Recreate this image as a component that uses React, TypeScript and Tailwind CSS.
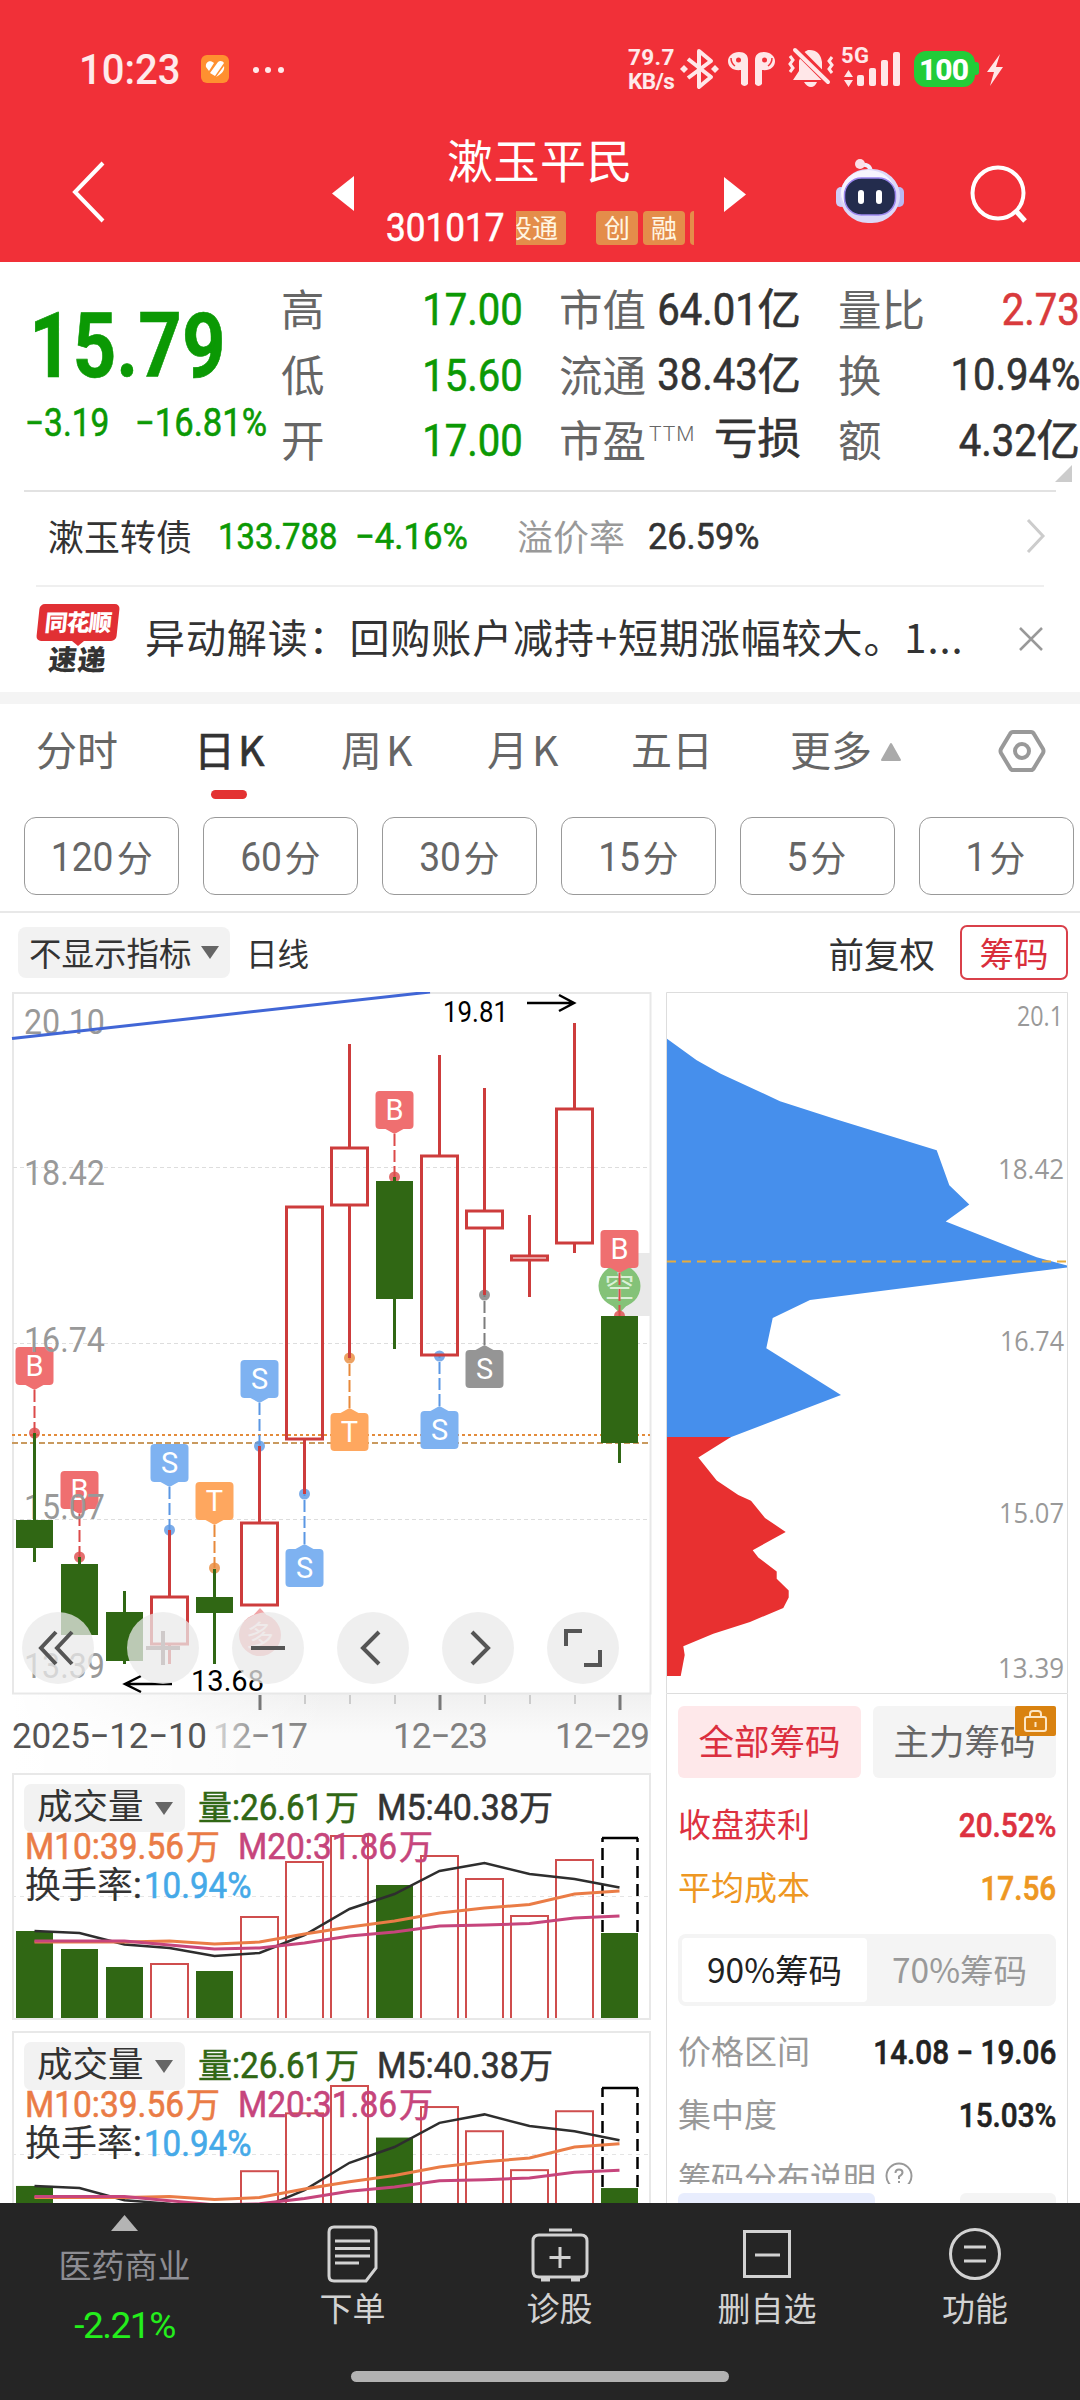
import React from "react";

const NUM = "font-['Roboto','Noto_Sans_CJK_SC',sans-serif] [-webkit-text-stroke:0.6px_currentColor]";

const QUOTE_ROWS = [
  ["高", "17.00", "", "市值", "64.01", "亿", "量比", "2.73", ""],
  ["低", "15.60", "", "流通", "38.43", "亿", "换", "10.94%", ""],
  ["开", "17.00", "", "市盈", "", "亏损", "额", "4.32", "亿"],
];

const MINUTES = ["120", "60", "30", "15", "5", "1"];

// y: wick top, body top, body bottom, wick bottom
interface Candle {
  up: boolean;
  y: [number, number, number, number];
}

const CANDLES: Candle[] = [
  { up: false, y: [1433, 1520, 1548, 1562] },
  { up: false, y: [1557, 1564, 1635, 1635] },
  { up: false, y: [1591, 1612, 1661, 1664] },
  { up: true, y: [1530, 1597, 1644, 1664] },
  { up: false, y: [1569, 1597, 1613, 1664] },
  { up: true, y: [1446, 1523, 1605, 1605] },
  { up: true, y: [1207, 1207, 1439, 1494] },
  { up: true, y: [1044, 1148, 1205, 1358] },
  { up: false, y: [1177, 1181, 1299, 1349] },
  { up: true, y: [1055, 1156, 1355, 1355] },
  { up: true, y: [1088, 1211, 1228, 1295] },
  { up: true, y: [1215, 1256, 1260, 1297] },
  { up: true, y: [1023, 1109, 1243, 1253] },
  { up: false, y: [1316, 1316, 1443, 1463] },
];

interface Signal {
  i: number;
  t: string;
  box: number;
  dot: number;
  fill: string;
  line: string;
}

const MARKS: Signal[] = [
  { i: 0, t: "B", box: 1347, dot: 1433, fill: "#ef6f70", line: "#dc4a4a" },
  { i: 1, t: "B", box: 1471, dot: 1557, fill: "#ef6f70", line: "#dc4a4a" },
  { i: 3, t: "S", box: 1444, dot: 1530, fill: "#7eb2f1", line: "#5b97e4" },
  { i: 4, t: "T", box: 1482, dot: 1568, fill: "#fea75f", line: "#e8893a" },
  { i: 5, t: "S", box: 1360, dot: 1446, fill: "#7eb2f1", line: "#5b97e4" },
  { i: 6, t: "S", box: 1549, dot: 1494, fill: "#7eb2f1", line: "#5b97e4" },
  { i: 7, t: "T", box: 1413, dot: 1358, fill: "#fea75f", line: "#e8893a" },
  { i: 8, t: "B", box: 1091, dot: 1177, fill: "#ef6f70", line: "#dc4a4a" },
  { i: 9, t: "S", box: 1411, dot: 1356, fill: "#7eb2f1", line: "#5b97e4" },
  { i: 10, t: "S", box: 1350, dot: 1295, fill: "#959595", line: "#7d7d7d" },
  { i: 13, t: "B", box: 1230, dot: 1316, fill: "#ef6f70", line: "#dc4a4a" },
];

const VOLUME = [1931, 1949, 1967, 1964, 1971, 1917, 1862, 1836, 1885, 1856, 1879, 1916, 1860, 1933];
const M5 = [1931, 1933, 1944.5, 1948, 1956, 1953, 1935, 1909, 1894, 1871, 1863, 1874, 1879, 1887.5];
const M10 = [1942, 1942, 1942, 1941, 1944, 1942, 1934, 1927, 1921, 1913, 1908, 1904.5, 1894, 1891];
const M20 = [1941, 1941, 1941, 1945, 1949, 1948, 1943, 1936, 1932, 1926, 1925, 1923.5, 1918, 1916];

const cx = (i: number) => 34.5 + i * 45;

const StatusBar: React.FC = () => (
  <div className="flex h-[136px] items-start pt-[46px] text-white/90">
    <span className="ml-[79px] mt-[2px] w-[103px] origin-left scale-x-[0.93] whitespace-nowrap font-['Roboto',sans-serif] text-[43px] font-medium leading-[43px]">
      10:23
    </span>
    <svg className="ml-[19px] mt-[9px]" width="28" height="28" viewBox="0 0 28 28">
      <rect width="28" height="28" rx="6" fill="#ff9030" />
      <path
        d="M5 12c-1-5 4-8 8-4l-5 8zM9 18l8-11c2-2 5-1 6 1l-9 13zM15 22l8-11c1 4-2 8-8 11z"
        fill="#fff"
      />
    </svg>
    <svg className="ml-[22px] mt-[20px]" width="34" height="8" fill="#ffe9ea">
      <circle cx="5" cy="4" r="3" />
      <circle cx="17" cy="4" r="3" />
      <circle cx="30" cy="4" r="3" />
    </svg>
    <div className="-mt-px ml-[343px] w-[46px] font-['Roboto',sans-serif] text-[22.500px] font-bold leading-[24px]">
      <div className="tracking-[0.4px]">79.7</div>
      <div className="tracking-[-0.6px]">KB/s</div>
    </div>
    <svg className="ml-[4px]" width="328" height="46" viewBox="678 46 328 46" fill="#ffe7e8">
      <path d="M688 59l23 18-12 10V51l12 10-23 17" fill="none" stroke="#ffe7e8" strokeWidth="4" strokeLinejoin="round" />
      <path d="M684 65l4 4-4 4-4-4zM715 65l4 4-4 4-4-4z" />
      <path d="M739 52c6 0 9 3 9 8v24q-3.500 4-7 0V70c-8 1-13-3-13-9 0-5 5-9 11-9z" />
      <path d="M764 52c-6 0-9 3-9 8v24q3.500 4 7 0V70c8 1 13-3 13-9 0-5-5-9-11-9z" />
      <circle cx="738.500" cy="60" r="2.500" fill="#f13038" />
      <circle cx="764.500" cy="60" r="2.500" fill="#f13038" />
      <path d="M731 58q0 5 4 8M772 58q0 5-4 8" stroke="#f13038" strokeWidth="1.500" fill="none" />
      <path d="M793 80l6-9V61q2-8 9-11 12-1 14 12v8l7 10zM804 82h13q-2 5-6 5t-7-5z" />
      <path d="M796 49l34 34" stroke="#f13038" strokeWidth="8" />
      <path d="M795 50l33 32" stroke="#ffe7e8" strokeWidth="4" strokeLinecap="round" />
      <path d="M790 56l3 4-3 4 3 4-3 4M832 57l-3 4 3 4-3 4 3 4" stroke="#ffe7e8" strokeWidth="3" fill="none" />
      <path d="M844 77h9l-4.500-7zM844 80h9l-4.500 7z" />
      <rect x="857" y="75" width="7" height="11" rx="2" />
      <rect x="869" y="68" width="7" height="18" rx="2" />
      <rect x="881" y="60" width="7" height="26" rx="2" />
      <rect x="893" y="52" width="7" height="34" rx="2" />
      <text x="841" y="63" fontFamily="Roboto" fontSize="22" fontWeight="700" textLength="28">
        5G
      </text>
      <rect x="914" y="51" width="61" height="36" rx="12" fill="#22cc38" />
      <rect x="973" y="62" width="6" height="13" rx="3" fill="#22cc38" />
      <text x="919" y="80" fontFamily="Roboto" fontSize="30" fontWeight="800" fill="#fff" textLength="50">
        100
      </text>
      <path d="M1000 54l-13 18h7l-4 14 13-19h-7z" />
    </svg>
  </div>
);

const Robot: React.FC = () => (
  <svg width="70" height="66" viewBox="0 0 70 66">
    <path d="M25 6q10-2 11 7" fill="none" stroke="#f3eefc" strokeWidth="4" />
    <circle cx="25" cy="5" r="5" fill="#fbdfe8" />
    <rect x="1" y="28" width="10" height="20" rx="5" fill="#cfcdf8" />
    <rect x="59" y="28" width="10" height="20" rx="5" fill="#b9b9f2" />
    <rect x="5" y="10" width="60" height="54" rx="28" fill="#dcd8f8" />
    <ellipse cx="33" cy="34" rx="27" ry="23" fill="#f7f5fe" />
    <rect x="9.500" y="19" width="51" height="37" rx="17" fill="#232c4d" stroke="#9b86ee" strokeWidth="1.500" />
    <rect x="23" y="31" width="6" height="14" rx="3" fill="#fff" />
    <rect x="41" y="31" width="6" height="14" rx="3" fill="#fff" />
  </svg>
);

const Header: React.FC = () => (
  <header className="h-[262px] bg-[#f13038]">
    <StatusBar />
    <div className="flex h-[126px] items-start text-white">
      <svg className="ml-[70px] mt-[24px]" width="38" height="64" fill="none" stroke="#fff" strokeWidth="4">
        <path d="M33 3L5 32l28 29" />
      </svg>
      <svg className="ml-[224px] mt-[40px]" width="22" height="35" fill="#fff">
        <path d="M22 0v35L0 17.500z" />
      </svg>
      <div className="ml-[32px] flex w-[308px] flex-col items-center">
        <h1 className="-mt-[2px] text-[46px] leading-[48px] tracking-[0.5px]">漱玉平民</h1>
        <div className="mt-[29px] flex h-[34px] w-[308px] items-center leading-[34px]">
          <span className={`${NUM} w-[130px] shrink-0 origin-left scale-x-[0.9] text-[39px]`}>301017</span>
          <div className="flex h-[34px] w-[178px] shrink-0 items-center overflow-hidden text-[26px] leading-[32px] text-[#fff6e2]">
            <div className="flex h-[34px] w-[50px] shrink-0 justify-end whitespace-nowrap rounded-r bg-[#e48d4a] pr-[8px]">
              股通
            </div>
            <div className="ml-[30px] h-[34px] w-[42px] shrink-0 rounded bg-[#e48d4a] text-center">创</div>
            <div className="ml-[5px] h-[34px] w-[42px] shrink-0 rounded bg-[#e48d4a] text-center">融</div>
            <div className="ml-[5px] h-[34px] w-[20px] shrink-0 rounded bg-[#e48d4a]" />
          </div>
        </div>
      </div>
      <svg className="ml-[30px] mt-[41px]" width="22" height="35" fill="#fff">
        <path d="M0 0v35l22-17.500z" />
      </svg>
      <div className="ml-[89px] mt-[23px]">
        <Robot />
      </div>
      <svg className="ml-[65px] mt-[28px]" width="60" height="62" fill="none" stroke="#fff" strokeWidth="4">
        <circle cx="28" cy="29" r="25.500" />
        <path d="M46 47l9 10" strokeWidth="5" />
      </svg>
    </div>
  </header>
);

// right aligned figure, the unit keeps its full width
const Figure: React.FC<{ num: string; unit: string; className: string }> = ({ num, unit, className }) => (
  <span className={`${NUM} flex shrink-0 justify-end whitespace-nowrap text-[44.500px] ${className}`}>
    {num && <span className="origin-right scale-x-[0.9]">{num}</span>}
    {unit && <span className="text-[43.500px]">{unit}</span>}
  </span>
);

const Quote: React.FC = () => (
  <section className="relative flex h-[228px] pt-[13px] text-[#333]">
    <div className={`${NUM} w-[281px] shrink-0 text-[#0b9904]`}>
      <div className="ml-[29px] mt-[35px] origin-left scale-x-[0.845] text-[90px] font-bold leading-[74px]">15.79</div>
      <div className="ml-[25px] mt-[18px] flex whitespace-nowrap text-[38px] leading-[42px]">
        <span className="w-[110px] origin-left scale-x-[0.88]">−3.19</span>
        <span className="origin-left scale-x-[0.91]">−16.81%</span>
      </div>
    </div>
    <div className="flex flex-col">
      {QUOTE_ROWS.map((r, n) => (
        <div key={r[0]} className="flex h-[65.500px] items-center text-[43.500px] leading-[65px]">
          <span className="w-[96px] text-[#666]">{r[0]}</span>
          <Figure num={r[1]} unit={r[2]} className="w-[146px] pt-[6px] text-[#0b9904]" />
          <span className="ml-[36px] flex w-[90px] shrink-0 whitespace-nowrap text-[#666]">
            {r[3]}
            {n === 2 && (
              <span className="ml-[3px] mt-[18px] font-['Roboto',sans-serif] text-[21px] font-light leading-[21px] tracking-[1px]">
                TTM
              </span>
            )}
          </span>
          <Figure num={r[4]} unit={r[5]} className={n === 2 ? "w-[152px] pt-[2px]" : "w-[152px] pt-[5px]"} />
          <span className="ml-[37px] w-[91px] text-[#666]">{r[6]}</span>
          <Figure num={r[7]} unit={r[8]} className={n === 0 ? "w-[151px] pt-[6px] text-[#d93a3c]" : "w-[151px] pt-[5px]"} />
        </div>
      ))}
    </div>
    <svg className="absolute bottom-[8px] right-[8px]" width="17" height="17" fill="#ccc">
      <path d="M17 0v17H0z" />
    </svg>
  </section>
);

const BondRow: React.FC = () => (
  <section className="mx-[24px] flex h-[95px] items-center border-t-2 border-[#e2e2e2] pb-[8px] pl-[24px] text-[36px] leading-[40px] text-[#333]">
    <span className="w-[170px]">漱玉转债</span>
    <span className={`${NUM} mt-[4px] w-[137px] origin-left scale-x-[0.9] text-[36.500px] text-[#0b9904]`}>133.788</span>
    <span className={`${NUM} mt-[4px] w-[162px] origin-left scale-x-[0.95] text-[36.500px] text-[#0b9904]`}>−4.16%</span>
    <span className="w-[131px] text-[#999]">溢价率</span>
    <span className={`${NUM} mt-[4px] origin-left scale-x-[0.94] text-[36.500px]`}>26.59%</span>
    <svg className="ml-auto mr-[10px] mt-[3px]" width="20" height="34" fill="none" stroke="#ccc" strokeWidth="3">
      <path d="M2 1l15 16L2 33" />
    </svg>
  </section>
);

const NewsRow: React.FC = () => (
  <section className="mx-[36px] flex h-[107px] items-start border-t-2 border-[#efefef] pt-[17px] text-[#333]">
    <div className="flex w-[84px] flex-col items-center">
      <div className="flex h-[37px] w-[80px] -skew-x-6 items-center justify-center rounded-[5px] bg-[#e13034] pb-[2px] text-[23px] font-black tracking-[-1px] text-white">
        同花顺
      </div>
      <svg width="16" height="5" fill="#e13034">
        <path d="M2 0h12L8 5z" />
      </svg>
      <div className="-skew-x-6 text-[28px] font-black leading-[24px] tracking-[1px]">速递</div>
    </div>
    <p className="ml-[25px] mt-[10px] w-[830px] whitespace-nowrap text-[40px] leading-[44px] tracking-[0.9px]">
      异动解读：回购账户减持+短期涨幅较大。1...
    </p>
    <svg className="ml-auto mt-[22px]" width="26" height="26" stroke="#999" strokeWidth="2.500">
      <path d="M2 2l22 22M24 2L2 24" />
    </svg>
  </section>
);

const Tabs: React.FC = () => (
  <nav className="flex h-[125px] items-start border-t-[12px] border-[#f4f4f4] pt-[21px] text-[41px] leading-[46px] text-[#666]">
    <span className="ml-[36px] w-[158px]">分时</span>
    <div className="w-[147px] text-[#333] [-webkit-text-stroke:0.7px_currentColor]">
      日<span className="ml-[3px]">K</span>
      <div className="ml-[17px] mt-[19px] h-[9px] w-[36px] rounded-full bg-[#e33232]" />
    </div>
    <span className="w-[146px]">
      周<span className="ml-[4px]">K</span>
    </span>
    <span className="w-[144px]">
      月<span className="ml-[4px]">K</span>
    </span>
    <span className="w-[159px]">五日</span>
    <span>更多</span>
    <svg className="ml-[7px] mt-[17px]" width="24" height="20" fill="#aaa">
      <path d="M12 2L21 18H3z" stroke="#aaa" strokeWidth="2" strokeLinejoin="round" />
    </svg>
    <svg className="ml-[95px] mt-[3px]" width="48" height="46" viewBox="0 0 48 46" fill="none" stroke="#999" strokeWidth="4">
      <path d="M15 4h18q2 0 3 2l9 15q1 2 0 4l-9 15q-1 2-3 2H15q-2 0-3-2L3 25q-1-2 0-4l9-15q1-2 3-2z" />
      <circle cx="24" cy="23" r="7" />
    </svg>
  </nav>
);

const Minutes: React.FC = () => (
  <div className="flex h-[96px] gap-[24px] overflow-hidden border-b-2 border-[#e8e8e8] pl-[24px]">
    {MINUTES.map((m) => (
      <div
        key={m}
        className="flex h-[78px] w-[155px] shrink-0 items-center justify-center rounded-[12px] border border-[#999] pr-[4px] text-[36px] leading-[40px] text-[#666]"
      >
        <span className="mt-[3px] origin-right scale-x-[0.93] font-['Roboto',sans-serif] text-[40px]">{m}</span>
        <span className="ml-[3px]">分</span>
      </div>
    ))}
  </div>
);

const Down: React.FC = () => (
  <svg width="18" height="13" fill="#666">
    <path d="M0 0h18L9 13z" />
  </svg>
);

const Toolbar: React.FC = () => (
  <div className="flex h-[79px] items-start pt-[12px] text-[#333]">
    <div className="ml-[18px] mt-[2px] flex h-[51px] w-[212px] items-center justify-between rounded-[8px] bg-[#f2f2f2] px-[11px] text-[32.500px] leading-[40px]">
      <span className="-mt-[2px]">不显示指标</span>
      <Down />
    </div>
    <span className="ml-[16px] mt-[5px] text-[31.500px] leading-[44px]">日线</span>
    <span className="ml-auto mt-[5px] text-[35.500px] leading-[46px]">前复权</span>
    <span className="ml-[25px] mr-[12px] flex h-[55px] w-[108px] items-center justify-center rounded-[7px] border-2 border-[#d9404a] pb-[2px] text-[34.500px] leading-[40px] text-[#d92f3c]">
      筹码
    </span>
  </div>
);

const Mark: React.FC<{ m: Signal }> = ({ m }) => {
  const x = cx(m.i);
  const below = m.box > m.dot;
  const tip = below ? m.box - 5 : m.box + 43;
  const base = below ? m.box : m.box + 38;
  return (
    <g>
      <path d={`M${x} ${tip}V${m.dot}`} stroke={m.line} strokeWidth="2" strokeDasharray="12 4" />
      <circle cx={x} cy={m.dot} r="5.500" fill={m.line} opacity="0.8" />
      <path d={`M${x - 9} ${base}h18L${x} ${tip}z`} fill={m.fill} />
      <rect x={x - 19} y={m.box} width="38" height="38" rx="4" fill={m.fill} />
      <text x={x} y={m.box + 29} fontSize="29" fill="#fff" textAnchor="middle" fontFamily="Roboto">
        {m.t}
      </text>
    </g>
  );
};

const AXIS = [
  ["20.10", 1034],
  ["18.42", 1185],
  ["16.74", 1352],
  ["15.07", 1519],
  ["13.39", 1678],
] as const;

const KLine: React.FC = () => (
  <svg className="block" width="652" height="781" viewBox="0 992 652 781">
    <defs>
      <linearGradient id="axisBg" x1="0" x2="0" y1="0" y2="1">
        <stop offset="0" stopColor="#f0f0f0" />
        <stop offset="0.5" stopColor="#fafafa" />
        <stop offset="1" stopColor="#fafafa" />
      </linearGradient>
      <linearGradient id="fade" x1="0" x2="1" y1="0" y2="0">
        <stop offset="0" stopColor="#ddd" />
        <stop offset="0.5" stopColor="#888" />
      </linearGradient>
      <linearGradient id="axisFade" x1="0" x2="1" y1="0" y2="0">
        <stop offset="0" stopColor="#fff" />
        <stop offset="0.5" stopColor="#fff" stopOpacity="0" />
      </linearGradient>
    </defs>
    <rect x="12" y="1694" width="639" height="80" fill="url(#axisBg)" />
    <rect x="12" y="1694" width="639" height="80" fill="url(#axisFade)" />
    <rect x="13" y="993" width="637.500" height="700.500" fill="#fff" stroke="#e8e8e8" strokeWidth="2" />
    {[1167.5, 1343.5, 1519.5].map((y) => (
      <path key={y} d={`M13 ${y}H650`} stroke="#ddd" strokeDasharray="4 3" />
    ))}
    <path d="M12 1435H650" stroke="#e38b3b" strokeWidth="2" strokeDasharray="3 3" />
    <path d="M12 1443H650" stroke="#c99a5f" strokeWidth="2" strokeDasharray="6 3" />
    <rect x="619" y="1253" width="32" height="63" fill="#e9e9e9" />
    {MARKS.slice(0, 2).map((m) => (
      <Mark key={m.i} m={m} />
    ))}
    <g className={NUM} fontSize="35" fill="#999">
      {AXIS.map(([t, y]) => (
        <text key={t} x="24" y={y} textLength="81" lengthAdjust="spacingAndGlyphs">
          {t}
        </text>
      ))}
    </g>
    <path d="M12 1038.500L430 992" stroke="#4166d6" strokeWidth="3" />
    <g fill="#84c278">
      <circle cx="619.500" cy="1286" r="21" />
      <path d="M607 1300h25l-12.500 13z" />
    </g>
    <text x="619.500" y="1297" fontSize="30" fill="#d9f0d5" textAnchor="middle">
      空
    </text>
    {MARKS.slice(2).map((m) => (
      <Mark key={m.i} m={m} />
    ))}
    {CANDLES.map(({ up, y: [a, b, c, d] }, i) =>
      up ? (
        <g key={i} stroke="#cd3c3c" strokeWidth="3" fill="none">
          <path d={`M${cx(i)} ${a}V${b}M${cx(i)} ${c}V${d}`} />
          <rect x={cx(i) - 18} y={b} width="36" height={c - b} />
        </g>
      ) : (
        <g key={i} fill="#306714">
          <rect x={cx(i) - 1.5} y={a} width="3" height={d - a} />
          <rect x={cx(i) - 18.5} y={b} width="37" height={c - b} />
        </g>
      ),
    )}
    <g fill="#f2a2a4">
      <circle cx="260" cy="1635" r="21" />
      <path d="M247 1622h26l-13-14z" />
    </g>
    <text x="260" y="1646" fontSize="28" fill="#fde9e9" textAnchor="middle">
      多
    </text>
    <g fontFamily="Roboto" fontSize="30">
      <text x="443" y="1022" textLength="65" lengthAdjust="spacingAndGlyphs">
        19.81
      </text>
      <text x="191" y="1691" textLength="73" lengthAdjust="spacingAndGlyphs">
        13.68
      </text>
    </g>
    <path d="M527 1003h47m-15-8l15 8-15 8M172 1684h-47m16-8l-16 8 16 8" fill="none" stroke="#000" strokeWidth="2.500" />
    {Array.from({ length: 9 }, (_, n) => n + 5).map((i) => (
      <path
        key={i}
        d={`M${cx(i) + 0.5} 1695v${(i - 5) % 4 === 0 ? 15 : 9}`}
        stroke={(i - 5) % 4 === 0 ? "#777" : "#ccc"}
        strokeWidth={(i - 5) % 4 === 0 ? 3 : 2}
      />
    ))}
    <g className={NUM} fontSize="35" fill="#808080">
      <text x="12" y="1748" textLength="195" fill="#555">
        2025−12−10
      </text>
      <text x="213" y="1748" textLength="95" fill="url(#fade)">
        12−17
      </text>
      <text x="393" y="1748" textLength="95">
        12−23
      </text>
      <text x="555" y="1748" textLength="95">
        12−29
      </text>
    </g>
  </svg>
);

const CONTROL_PATHS = [
  "M34 20L19 36l15 16M50 20L35 36l15 16",
  "M36 19v34M19 36h34",
  "M19 36h34",
  "M42 20L26 36l16 16",
  "M30 20l16 16-16 16",
  "M19 34V19h16M53 38v15H37",
];

const ChartControls: React.FC = () => (
  <div className="absolute left-[22px] top-[620px] flex gap-[33px]">
    {CONTROL_PATHS.map((d, i) => (
      <div key={d} className="h-[72px] w-[72px] rounded-full bg-[#eaeaea]/75">
        <svg width="72" height="72" fill="none" stroke={i === 1 ? "#cfcaca" : "#555"} strokeWidth="4">
          <path d={d} />
        </svg>
      </div>
    ))}
  </div>
);

const VolumePanel: React.FC<{ stretch: number; offset: number; height: string }> = ({ stretch, offset, height }) => {
  const y = (v: number) => (v - 1836) * stretch + offset;
  const line = (d: number[]) => d.map((v, i) => `${cx(i) - 12},${y(v)}`).join(" ");
  return (
    <div className={`relative ml-[12px] w-[639px] overflow-hidden border-2 border-[#e8e8e8] ${height}`}>
      <svg className="absolute -left-[2px] -top-[2px]" width="639" height="260">
        <path d="M0 123.500H638" stroke="#e4e4e4" strokeDasharray="4 4" />
        {VOLUME.map((v, i) =>
          CANDLES[i].up ? (
            <rect
              key={i}
              x={cx(i) - 30.5}
              y={y(v)}
              width="37"
              height={y(2019) - y(v)}
              fill="none"
              stroke="#cf4e4e"
              strokeWidth="2"
            />
          ) : (
            <rect key={i} x={cx(i) - 30.5} y={y(v)} width="37" height={y(2019.5) - y(v)} fill="#306714" />
          ),
        )}
        <path
          d={`M590.500 ${y(1932)}V${y(1838)}M625.500 ${y(1932)}V${y(1838)}`}
          stroke="#000"
          strokeWidth="2.500"
          strokeDasharray="12 6"
        />
        <path d={`M590 ${y(1838)}h36`} stroke="#000" strokeWidth="2.500" />
        <g fill="none" strokeWidth="2.500">
          <polyline points={line(M5)} stroke="#2e2e2e" />
          <polyline points={line(M10)} stroke="#ea7c46" strokeWidth="3" />
          <polyline points={line(M20)} stroke="#c6457c" strokeWidth="3" />
        </g>
      </svg>
      <div className={`relative whitespace-nowrap text-[36px] ${NUM}`}>
        <div className="flex h-[57px] items-end pl-[10px] leading-[48px] text-[#333]">
          <div className="flex h-[48px] w-[161px] items-center gap-[11px] rounded-[7px] bg-[#f2f2f2] pl-[13px] text-[35.500px] [-webkit-text-stroke:0]">
            <span className="-mt-[2px]">成交量</span>
            <Down />
          </div>
          <div className="ml-[13px] flex w-[181px] text-[#306714]">
            <span className="text-[34px]">量</span>
            <span className="w-[93px] origin-left scale-x-[0.92]">:26.61</span>
            <span className="text-[34px]">万</span>
          </div>
          <span className="-ml-[2px] w-[142px] origin-left scale-x-[0.94]">M5:40.38</span>
          <span className="text-[34px]">万</span>
        </div>
        <div className="-mt-[2px] flex h-[34px] pl-[11px] leading-[34px]">
          <div className="flex w-[213px] text-[#ea7c46]">
            <span className="w-[161px] origin-left scale-x-[0.93]">M10:39.56</span>
            <span className="text-[34px]">万</span>
          </div>
          <div className="flex text-[#c6457c]">
            <span className="w-[161px] origin-left scale-x-[0.93]">M20:31.86</span>
            <span className="text-[34px]">万</span>
          </div>
        </div>
        <div className="flex pl-[11px] pt-[2px] leading-[40px] text-[#333]">
          <span className="text-[36px] [-webkit-text-stroke:0]">换手率</span>
          <span>:</span>
          <span className="ml-[2px] origin-left scale-x-[0.92] text-[#45a9e8]">10.94%</span>
        </div>
      </div>
    </div>
  );
};

const ChipChart: React.FC = () => (
  <svg className="block" width="402" height="702" viewBox="666 992 402 702">
    <path
      fill="#468fec"
      d="M667 1038.800L696.700 1060.300 720.700 1073.700 780 1101.200 836.700 1119.600 936.700 1150.300 949.300 1185.200 969.300 1204.500 945.700 1221.500 1036.700 1257.300 1067 1265.600V1267.400L810 1300 772.700 1317.900 766.300 1348.200 841 1395 729.300 1437.800H667z"
    />
    <path
      fill="#e83030"
      d="M667 1437H731L698.300 1457.500 716.700 1480.500 738.300 1495 751 1500.700 765 1518 785.700 1531.900 752.700 1550.200 758.300 1557.600 776.700 1571.400V1578.700L788.700 1590.600V1597.500L783.300 1608 750 1621.900 713.300 1633.800 683.300 1646.200 684.700 1655 680.700 1676H667z"
    />
    <path d="M667 1261.500H1067" stroke="#e5ac3e" strokeWidth="2" strokeDasharray="9 6" />
    <path d="M666.500 1693.500V992.500H1067.500V1693.500z" fill="none" stroke="#ddd" />
    <g fontFamily="Open Sans" fontSize="27.500" fill="#999">
      <text x="1017" y="1026" textLength="46" lengthAdjust="spacingAndGlyphs">
        20.1
      </text>
      <text x="998" y="1179" textLength="66" lengthAdjust="spacingAndGlyphs">
        18.42
      </text>
      <text x="1000" y="1351" textLength="64" lengthAdjust="spacingAndGlyphs">
        16.74
      </text>
      <text x="999" y="1523" textLength="65" lengthAdjust="spacingAndGlyphs">
        15.07
      </text>
      <text x="998" y="1678" textLength="66" lengthAdjust="spacingAndGlyphs">
        13.39
      </text>
    </g>
  </svg>
);

interface StatProps {
  label: string;
  value: string;
  color: string;
  valueColor?: string;
}

const Stat: React.FC<StatProps> = ({ label, value, color, valueColor = "" }) => (
  <div className={`flex h-[63px] items-center justify-between ${color}`}>
    <span className="-mt-[3px] text-[33px]">{label}</span>
    <span className={`${NUM} mt-px origin-right scale-x-[0.9] text-[33px] font-medium ${valueColor}`}>{value}</span>
  </div>
);

const ChipPanel: React.FC = () => (
  <div className="w-[402px]">
    <ChipChart />
    <div className="h-[509px] overflow-hidden border-x border-[#ddd] px-[11px] pt-[12px]">
      <div className="flex gap-[12px] text-[35.500px] leading-[68px]">
        <div className="h-[72px] flex-1 rounded-[6px] bg-[#fee8ea] text-center text-[#db2f3f]">全部筹码</div>
        <div className="relative h-[72px] flex-1 rounded-[6px] bg-[#f4f4f4] text-center text-[#666]">
          主力筹码
          <svg className="absolute right-0 top-0" width="41" height="30" fill="none" stroke="#fde6c4" strokeWidth="2">
            <rect width="41" height="30" rx="2" fill="#d98210" stroke="none" />
            <rect x="10" y="11" width="21" height="14" rx="2" />
            <path d="M15 11V8q0-3 3-3h5q3 0 3 3v3M20.500 16v5" />
          </svg>
        </div>
      </div>
      <div className="mt-[16px]">
        <Stat label="收盘获利" value="20.52%" color="text-[#dd3140]" />
        <Stat label="平均成本" value="17.56" color="text-[#ee9722]" />
      </div>
      <div className="mt-[14px] flex h-[72px] rounded-[8px] bg-[#f4f4f4] p-[4px] text-[33.500px] leading-[61px]">
        <div className="w-[185px] rounded-[4px] bg-white text-center text-[#222]">90%筹码</div>
        <div className="flex-1 text-center text-[#999]">70%筹码</div>
      </div>
      <div className="mt-[15px]">
        <Stat label="价格区间" value="14.08 − 19.06" color="text-[#999]" valueColor="text-[#222]" />
        <Stat label="集中度" value="15.03%" color="text-[#999]" valueColor="text-[#222]" />
      </div>
      <div className="flex h-[37px] items-start overflow-hidden pt-[12px] text-[#999]">
        <span className="text-[33px] leading-[36px]">筹码分布说明</span>
        <svg className="ml-[9px] mt-[3px] shrink-0" width="28" height="28" fill="none" stroke="#999" strokeWidth="2">
          <circle cx="14" cy="14" r="12.500" />
          <path d="M10.500 11q0-3.500 3.500-3.500t3.500 3q0 2-3.500 4v2.500M14 19v2" />
        </svg>
      </div>
      <div className="mt-[9px] flex justify-between">
        <div className="h-[60px] w-[197px] rounded-[6px] bg-[#e8edfd]" />
        <div className="h-[60px] w-[96px] rounded-[6px] bg-[#f4f4f4]" />
      </div>
    </div>
  </div>
);

const NAV = [
  {
    label: "下单",
    width: "w-[207px]",
    icon: (
      <>
        <path d="M11 3h37q5 0 5 5v36L43 57H11q-5 0-5-5V8q0-5 5-5z" />
        <path d="M12 17h35M12 24.500h35M12 32h35M12 39h24" />
      </>
    ),
  },
  {
    label: "诊股",
    width: "w-[207px]",
    icon: (
      <path d="M19 6h23M9 11h42q6 0 6 6v30q0 6-6 6H9q-6 0-6-6V17q0-6 6-6zM11 56h9M41 56h9M30 23v21M19.500 33.500h21" />
    ),
  },
  {
    label: "删自选",
    width: "w-[208px]",
    icon: <path d="M7.500 7.500h45v45h-45zM18 31h25" />,
  },
  {
    label: "功能",
    width: "w-[208px]",
    icon: (
      <>
        <circle cx="30" cy="30" r="24.500" />
        <path d="M19 23h22M19 37h22" />
      </>
    ),
  },
];

const BottomNav: React.FC = () => (
  <footer className="h-[197px] bg-[#252525]">
    <div className="flex h-[168px]">
      <div className="flex w-[249px] flex-col items-center pt-[12px]">
        <svg width="27" height="16" fill="#b4b4b4">
          <path d="M13.500 0L27 16H0z" />
        </svg>
        <span className="mt-[13px] text-[33px] leading-[40px] text-[#8d8d93]">医药商业</span>
        <span className="mt-[23px] font-['Roboto',sans-serif] text-[37px] leading-[38px] tracking-[-1.500px] text-[#24ee1c]">
          -2.21%
        </span>
      </div>
      {NAV.map((n) => (
        <div key={n.label} className={`flex flex-col items-center pt-[21px] ${n.width}`}>
          <svg width="60" height="60" fill="none" stroke="#d2d2d2" strokeWidth="3">
            {n.icon}
          </svg>
          <span className="mt-[3px] text-[33px] leading-[40px] text-[#d2d2d2]">{n.label}</span>
        </div>
      ))}
    </div>
    <div className="mx-auto h-[11px] w-[378px] rounded-full bg-[#b2b2b2]" />
  </footer>
);

export default function App() {
  return (
    <div className="flex h-[2400px] w-[1080px] flex-col overflow-hidden bg-white font-['Noto_Sans_CJK_SC',sans-serif]">
      <Header />
      <Quote />
      <BondRow />
      <NewsRow />
      <Tabs />
      <Minutes />
      <Toolbar />
      <main className="flex h-[1211px] shrink-0 gap-[14px] overflow-hidden">
        <div className="relative w-[652px]">
          <KLine />
          <ChartControls />
          <VolumePanel stretch={1} offset={63} height="h-[247px]" />
          <div className="h-[11px]" />
          <VolumePanel stretch={1.052} offset={55} height="h-[260px]" />
        </div>
        <ChipPanel />
      </main>
      <BottomNav />
    </div>
  );
}
